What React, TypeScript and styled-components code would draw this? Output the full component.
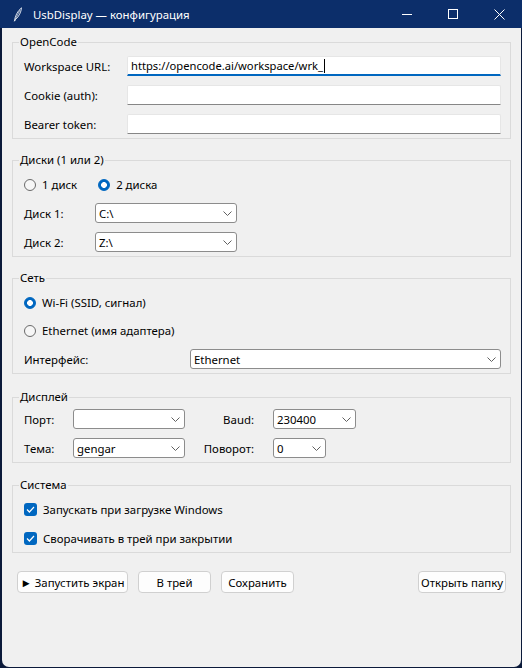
import styled, { createGlobalStyle } from 'styled-components';

const GlobalStyle = createGlobalStyle`
  html, body {
    margin: 0;
    padding: 0;
    background: #0b1a3a;
  }
  body {
    font-family: "Noto Sans", "Open Sans", sans-serif;
    font-size: 11.4px;
    color: #000;
  }
`;

const Window = styled.div`
  width: 522px;
  height: 668px;
  display: flex;
  flex-direction: column;
  background: #0b1a3a;
  overflow: hidden;
`;

const TitleBar = styled.div`
  height: 28px;
  flex-shrink: 0;
  display: flex;
  align-items: center;
  background: #0c2e6a;
  color: #fff;
  padding-left: 13px;
`;

const TitleText = styled.span`
  margin-left: 11px;
  font-size: 11.4px;
`;

const Caption = styled.div`
  margin-left: auto;
  display: flex;
  height: 100%;
`;

const CaptionButton = styled.div`
  width: 46px;
  height: 100%;
  display: flex;
  align-items: center;
  justify-content: center;
`;

const Client = styled.div`
  flex: 1;
  margin: 0 1px 1px 2px;
  background: #f0f0f0;
  border-radius: 0 0 7px 7px;
  padding: 6px 10px 0 10px;
  display: flex;
  flex-direction: column;
`;

const Group = styled.fieldset<{ $mt?: number }>`
  margin: ${({ $mt }) => $mt ?? 0}px 0 0 0;
  padding: 0;
  border: 1px solid #dadada;
  min-width: 0;
`;

const Legend = styled.legend`
  margin-left: 6px;
  padding: 0 1px;
  line-height: 16px;
`;

const GroupBody = styled.div<{ $pt: number; $pb: number }>`
  display: flex;
  flex-direction: column;
  gap: 9px;
  padding: ${({ $pt, $pb }) => `${$pt}px 9px ${$pb}px 11px`};
`;

const Row = styled.div`
  height: 20px;
  display: flex;
  align-items: center;
`;

const FieldLabel = styled.span<{ $w: number; $right?: boolean }>`
  width: ${({ $w }) => $w}px;
  flex-shrink: 0;
  text-align: ${({ $right }) => ($right ? 'right' : 'left')};
  padding-right: ${({ $right }) => ($right ? 19 : 0)}px;
  box-sizing: border-box;
`;

const Entry = styled.div<{ $focused?: boolean }>`
  flex: 1;
  height: 20px;
  box-sizing: border-box;
  background: #fff;
  border: 1px solid #e6e6e6;
  border-bottom: ${({ $focused }) => ($focused ? '2px solid #0067c0' : '1px solid #868686')};
  border-radius: 2px 2px 0 0;
  padding: 0 3px;
  display: flex;
  align-items: center;
  font-size: 11.2px;
  white-space: nowrap;
`;

const Caret = styled.span`
  width: 1px;
  height: 14px;
  background: #000;
  margin-left: 1px;
`;

const Combo = styled.div<{ $w?: number }>`
  width: ${({ $w }) => ($w ? `${$w}px` : 'auto')};
  flex: ${({ $w }) => ($w ? 'none' : 1)};
  height: 20px;
  box-sizing: border-box;
  background: #fff;
  border: 1px solid #8c8c8c;
  border-radius: 3px;
  padding: 0 4px 0 3px;
  display: flex;
  align-items: center;
  justify-content: space-between;
`;

const OptionRow = styled.div<{ $gap?: number; $h?: number }>`
  height: ${({ $h }) => $h ?? 20}px;
  display: flex;
  align-items: center;
  gap: ${({ $gap }) => $gap ?? 0}px;
`;

const Option = styled.label`
  display: flex;
  align-items: center;
  gap: 6px;
`;

const RadioDot = styled.span<{ $on?: boolean }>`
  width: 12px;
  height: 12px;
  border-radius: 50%;
  box-sizing: border-box;
  background: ${({ $on }) =>
    $on ? 'radial-gradient(circle, #fff 0 2.6px, #0067c0 3.2px)' : '#f6f6f6'};
  border: ${({ $on }) => ($on ? '1px solid #0067c0' : '1px solid #6a6a6a')};
`;

const CheckBox = styled.span`
  width: 13px;
  height: 13px;
  border-radius: 3px;
  background: #0067c0;
  display: flex;
  align-items: center;
  justify-content: center;
`;

const ButtonBar = styled.div`
  margin-top: 18px;
  padding: 0 5px;
  display: flex;
  gap: 10px;
`;

const Button = styled.div<{ $w: number; $push?: boolean }>`
  width: ${({ $w }) => $w}px;
  height: 22px;
  box-sizing: border-box;
  margin-left: ${({ $push }) => ($push ? 'auto' : 0)};
  background: #fdfdfd;
  border: 1px solid #d0d0d0;
  border-radius: 4px;
  display: flex;
  align-items: center;
  justify-content: center;
  white-space: nowrap;
`;

const Chevron = () => (
  <svg width="9" height="5" viewBox="0 0 9 5">
    <polyline points="0.5,0.5 4.5,4.5 8.5,0.5" fill="none" stroke="#606060" strokeWidth="1" />
  </svg>
);

const Check = () => (
  <svg width="9" height="7" viewBox="0 0 9 7">
    <polyline points="1,3.5 3.4,6 8,1" fill="none" stroke="#fff" strokeWidth="1.2" />
  </svg>
);

const Feather = () => (
  <svg width="9" height="15" viewBox="0 0 9 15">
    <path d="M1.5 14 C2 9 4.5 4 8.5 0.8 C8.2 5 6 9.5 2.6 12.4 Z" fill="none" stroke="#e8ecf4" strokeWidth="0.9" />
    <line x1="1.2" y1="14.5" x2="7" y2="3" stroke="#e8ecf4" strokeWidth="0.7" />
  </svg>
);

function Select({ value, w }: { value?: string; w?: number }) {
  return (
    <Combo $w={w}>
      <span>{value}</span>
      <Chevron />
    </Combo>
  );
}

export default function App() {
  return (
    <Window>
      <GlobalStyle />
      <TitleBar>
        <Feather />
        <TitleText>UsbDisplay — конфигурация</TitleText>
        <Caption>
          <CaptionButton>
            <svg width="10" height="1" viewBox="0 0 10 1">
              <rect width="10" height="1" fill="#fff" />
            </svg>
          </CaptionButton>
          <CaptionButton>
            <svg width="10" height="10" viewBox="0 0 10 10">
              <rect x="0.5" y="0.5" width="9" height="9" fill="none" stroke="#fff" strokeWidth="1" />
            </svg>
          </CaptionButton>
          <CaptionButton>
            <svg width="11" height="11" viewBox="0 0 11 11">
              <path d="M0.5 0.5 L10.5 10.5 M10.5 0.5 L0.5 10.5" stroke="#fff" strokeWidth="1" />
            </svg>
          </CaptionButton>
        </Caption>
      </TitleBar>

      <Client>
        <Group>
          <Legend>OpenCode</Legend>
          <GroupBody $pt={6} $pb={4}>
            <Row>
              <FieldLabel $w={103}>Workspace URL:</FieldLabel>
              <Entry $focused>
                https://opencode.ai/workspace/wrk_
                <Caret />
              </Entry>
            </Row>
            <Row>
              <FieldLabel $w={103}>Cookie (auth):</FieldLabel>
              <Entry />
            </Row>
            <Row>
              <FieldLabel $w={103}>Bearer token:</FieldLabel>
              <Entry />
            </Row>
          </GroupBody>
        </Group>

        <Group $mt={13}>
          <Legend>Диски (1 или 2)</Legend>
          <GroupBody $pt={7} $pb={4}>
            <OptionRow $gap={21} $h={19}>
              <Option>
                <RadioDot />1 диск
              </Option>
              <Option>
                <RadioDot $on />2 диска
              </Option>
            </OptionRow>
            <Row>
              <FieldLabel $w={71}>Диск 1:</FieldLabel>
              <Select value="C:\" w={142} />
            </Row>
            <Row>
              <FieldLabel $w={71}>Диск 2:</FieldLabel>
              <Select value="Z:\" w={142} />
            </Row>
          </GroupBody>
        </Group>

        <Group $mt={13}>
          <Legend>Сеть</Legend>
          <GroupBody $pt={7} $pb={4}>
            <OptionRow $h={19}>
              <Option>
                <RadioDot $on />Wi-Fi (SSID, сигнал)
              </Option>
            </OptionRow>
            <OptionRow $h={19}>
              <Option>
                <RadioDot />Ethernet (имя адаптера)
              </Option>
            </OptionRow>
            <Row>
              <FieldLabel $w={166}>Интерфейс:</FieldLabel>
              <Select value="Ethernet" />
            </Row>
          </GroupBody>
        </Group>

        <Group $mt={15}>
          <Legend>Дисплей</Legend>
          <GroupBody $pt={4} $pb={4}>
            <Row>
              <FieldLabel $w={49}>Порт:</FieldLabel>
              <Select w={112} />
              <FieldLabel $w={88} $right>
                Baud:
              </FieldLabel>
              <Select value="230400" w={83} />
            </Row>
            <Row>
              <FieldLabel $w={49}>Тема:</FieldLabel>
              <Select value="gengar" w={112} />
              <FieldLabel $w={88} $right>
                Поворот:
              </FieldLabel>
              <Select value="0" w={53} />
            </Row>
          </GroupBody>
        </Group>

        <Group $mt={14}>
          <Legend>Система</Legend>
          <GroupBody $pt={6} $pb={4}>
            <OptionRow>
              <Option>
                <CheckBox>
                  <Check />
                </CheckBox>
                Запускать при загрузке Windows
              </Option>
            </OptionRow>
            <OptionRow>
              <Option>
                <CheckBox>
                  <Check />
                </CheckBox>
                Сворачивать в трей при закрытии
              </Option>
            </OptionRow>
          </GroupBody>
        </Group>

        <ButtonBar>
          <Button $w={111}>► Запустить экран</Button>
          <Button $w={73}>В трей</Button>
          <Button $w={73}>Сохранить</Button>
          <Button $w={88} $push>
            Открыть папку
          </Button>
        </ButtonBar>
      </Client>
    </Window>
  );
}
